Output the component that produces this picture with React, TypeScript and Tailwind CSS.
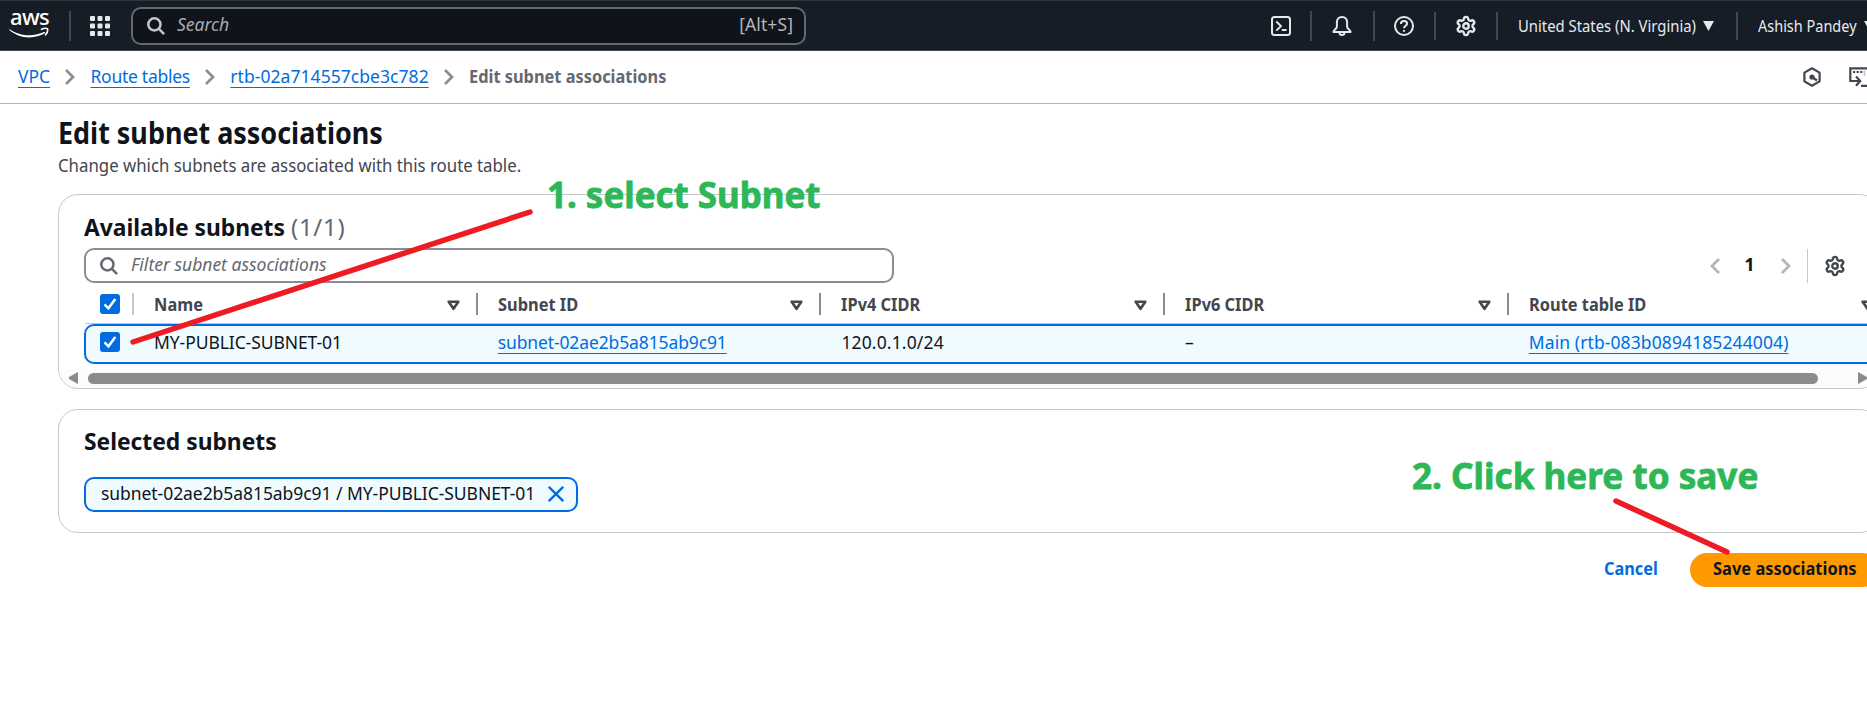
import type { ReactNode } from "react";
import { Settings } from "lucide-react";

const columns = ["Name", "Subnet ID", "IPv4 CIDR", "IPv6 CIDR", "Route table ID"];

function AwsLogo() {
  return (
    <div className="mt-[7px] flex w-[40px] shrink-0 flex-col self-start">
      <span className="h-[19px] pl-px text-[22px] leading-[17px] font-medium tracking-[-0.7px] text-white">aws</span>
      <svg className="h-[11px] w-[40px]" viewBox="0 0 40 11" fill="none">
        <path d="M.6 2.2C7 6.400 13 8.200 20.500 8.200c5 0 10.500-1.200 14.600-3.200.9-.3 1.500.7.700 1.300C31.500 9 25.500 10.400 20.300 10.400 12.500 10.400 5.500 7.600.4 3c-.5-.5-.2-1 .2-.8Z" fill="#fff" />
        <path d="M32.500 2.300c2.200-1 5-1 6-.6.400 1.600-.5 4.600-2 6.200" stroke="#fff" strokeWidth="1.600" strokeLinecap="round" strokeLinejoin="round" />
      </svg>
    </div>
  );
}

function AppsIcon() {
  return (
    <svg className="size-[20px]" viewBox="0 0 20 20" fill="#e1ebec">
      {[0, 7.500, 15].map((y) => [0, 7.500, 15].map((x) => <rect key={`${x}-${y}`} x={x} y={y} width="5" height="5" rx="1" />))}
    </svg>
  );
}

function SearchIcon({ className }: { className: string }) {
  return (
    <svg className={className} viewBox="0 0 18 18" fill="none" stroke="currentColor" strokeWidth="2.500">
      <circle cx="7.400" cy="7.400" r="6.100" />
      <path d="M11.700 11.700l5.400 5.400" />
    </svg>
  );
}

function TerminalIcon() {
  return (
    <svg className="size-[20px]" viewBox="0 0 20 20" fill="none" stroke="#e1ebec" strokeWidth="2" strokeLinejoin="round">
      <rect x="1" y="1" width="18" height="18" rx="2.500" />
      <path d="M5.300 5.500l4.700 4.600-4.700 4.500M10.800 14h4.800" />
    </svg>
  );
}

function BellIcon() {
  return (
    <svg className="size-[20px]" viewBox="0 0 20 20" fill="none" stroke="#e1ebec" strokeWidth="2" strokeLinejoin="round">
      <path d="M10 1C6.800 1 4.900 3.300 4.900 6.300v4.200c0 1.300-.8 2.200-2 3l-1.500 2.400h17.200l-1.500-2.400c-1.200-.8-2-1.700-2-3V6.300C15.100 3.300 13.200 1 10 1Z" />
      <path d="M7.500 16.500c0 1.500 1 2.500 2.500 2.500s2.500-1 2.500-2.500" />
    </svg>
  );
}

function HelpIcon() {
  return (
    <svg className="size-[20px]" viewBox="0 0 20 20" fill="none" stroke="#e1ebec" strokeWidth="2">
      <circle cx="10" cy="10" r="9" />
      <path d="M6.900 8c0-1.700 1.300-2.900 3.100-2.900s3.100 1.100 3.100 2.600c0 2-3.100 2.100-3.100 4.500" />
      <path d="M9 14h2v1.800H9z" fill="#e1ebec" stroke="none" />
    </svg>
  );
}

function Chevron({ className, left = false }: { className: string; left?: boolean }) {
  return (
    <svg className={`shrink-0 ${className}`} viewBox="0 0 10 16" fill="none" stroke="currentColor" strokeWidth="2.700">
      <path d={left ? "M9 1L2 8l7 7" : "M1 1l7 7-7 7"} />
    </svg>
  );
}

function SortIcon() {
  return (
    <svg className="h-[11px] w-[13px]" viewBox="0 0 13 11" fill="none" stroke="#424650" strokeWidth="2.600" strokeLinejoin="round">
      <path d="M1.700 1.700h9.600L6.500 8.800z" />
    </svg>
  );
}

function Checkbox() {
  return (
    <svg className="size-[20px] shrink-0" viewBox="0 0 20 20" fill="none">
      <rect width="20" height="20" rx="3" fill="#006ce0" />
      <path d="M4.500 10.300l4 4 6.800-9.300" stroke="#fff" strokeWidth="2.500" />
    </svg>
  );
}

function Link({ children, className = "" }: { children: ReactNode; className?: string }) {
  return (
    <a className={`shrink-0 whitespace-nowrap text-[#006ce0] underline decoration-1 underline-offset-[4px] [text-decoration-skip-ink:none] ${className}`}>
      {children}
    </a>
  );
}

function Divider({ className }: { className: string }) {
  return <span className={`w-[2px] shrink-0 bg-[#424650] ${className}`} />;
}

function TopBar() {
  return (
    <header className="flex h-[51px] items-center border-t border-b border-t-[#2f343d] border-b-[#424650] bg-[#161d26] pl-[9px] text-[#e6eaee]">
      <AwsLogo />
      <Divider className="ml-[20px] h-[30px]" />
      <div className="ml-[19px] shrink-0"><AppsIcon /></div>
      <div className="ml-[21px] flex h-[38px] w-[675px] shrink-0 items-center rounded-[10px] border-2 border-[#656871] bg-[#0f141a] pr-[11px] pl-[14px] text-[17.5px]">
        <SearchIcon className="size-[18px] text-[#c6c6cd]" />
        <span className="ml-[12px] pb-[2px] text-[#a9a9b3] italic">Search</span>
        <span className="ml-auto pb-[2px] tracking-[0.1px] text-[#b4b4bb]">[Alt+S]</span>
      </div>
      <div className="ml-[465px] flex shrink-0 items-center">
        <TerminalIcon />
        <Divider className="ml-[19px] h-[30px]" />
        <div className="ml-[20px]"><BellIcon /></div>
        <Divider className="ml-[21px] h-[30px]" />
        <div className="ml-[19px]"><HelpIcon /></div>
        <Divider className="ml-[20px] h-[28px]" />
        <div className="ml-[19px]"><Settings size={22} strokeWidth={2.600} color="#e1ebec" /></div>
        <Divider className="ml-[19px] h-[28px]" />
      </div>
      <div className="ml-[20px] flex w-[197px] shrink-0 items-center">
        <span className="w-[178px] shrink-0 origin-left scale-x-[0.927] text-[16px] whitespace-nowrap">United States (N. Virginia)</span>
        <svg className="ml-[7px] h-[10px] w-[11px] shrink-0" viewBox="0 0 11 10" fill="#e1ebec"><path d="M0 0h11L5.500 10z" /></svg>
      </div>
      <Divider className="ml-[21px] h-[28px]" />
      <span className="ml-[20px] w-[99px] shrink-0 origin-left scale-x-[0.905] text-[16px] whitespace-nowrap">Ashish Pandey</span>
      <svg className="ml-[7px] h-[10px] w-[11px] shrink-0" viewBox="0 0 11 10" fill="#e1ebec"><path d="M0 0h11L5.500 10z" /></svg>
    </header>
  );
}

function Breadcrumbs() {
  return (
    <nav className="flex h-[53px] items-center border-b border-[#b4b4bb] pb-px pl-[18px] text-[17.5px]">
      <Link className="w-[32px]">VPC</Link>
      <Chevron className="ml-[15px] h-[16px] w-[10px] text-[#8c8c94]" />
      <Link className="ml-[15.500px] tracking-[-0.280px]">Route tables</Link>
      <Chevron className="ml-[15.500px] h-[16px] w-[10px] text-[#8c8c94]" />
      <Link className="ml-[15px] tracking-[0.050px]">rtb-02a714557cbe3c782</Link>
      <Chevron className="ml-[15.500px] h-[16px] w-[10px] text-[#8c8c94]" />
      <span className="ml-[15px] w-[212px] shrink-0 origin-left scale-x-[0.935] font-bold whitespace-nowrap text-[#656871]">Edit subnet associations</span>
      <svg className="ml-[1122px] h-[20px] w-[18px] shrink-0" viewBox="0 0 18 20" fill="none" stroke="#424650" strokeWidth="2.200" strokeLinejoin="round">
        <path d="M9 1.300l7.600 4.300v8.800L9 18.700l-7.600-4.300V5.600z" />
        <path d="M9 10l5 3.500" />
        <circle cx="9" cy="10" r="2.600" fill="#424650" stroke="none" />
      </svg>
      <svg className="ml-[28px] h-[20px] w-[24px] shrink-0" viewBox="0 0 24 20" fill="none" stroke="#424650" strokeWidth="2.200">
        <path d="M5 14H1.300V1.300H22M12 18.800h10" />
        <path d="M4 5h2.200M7.600 5h2.200M11.200 5h2.200" />
        <path d="M3.500 14h7M7 9.500l4.200 4.500L7 18.800" />
        <path d="M15.500 2v7" stroke="#c6c6cd" strokeWidth="1.500" />
      </svg>
    </nav>
  );
}

function AvailableSubnets() {
  return (
    <section className="flex h-[195px] w-[1822px] flex-col overflow-hidden rounded-[20px] border border-[#c6c6cd] bg-white">
      <h2 className="flex h-[53px] items-end pl-[25px] text-[24px] leading-[43px] font-bold text-[#0f141a]">
        <span className="w-[207px] origin-left scale-x-[0.950] whitespace-nowrap">Available subnets</span>
        <span className="font-normal tracking-[0.700px] text-[#656871]">(1/1)</span>
      </h2>
      <div className="flex h-[35px] items-center pl-[25px]">
        <div className="flex h-[35px] w-[810px] items-center rounded-[10px] border-2 border-[#8c8c94] pl-[14px] text-[17.5px]">
          <SearchIcon className="size-[18px] text-[#656871]" />
          <span className="ml-[13px] pb-[2px] text-[#656871] italic">Filter subnet associations</span>
        </div>
        <div className="ml-[816px] flex items-center">
          <Chevron left className="h-[16px] w-[10px] text-[#b4b4bb]" />
          <span className="w-[61px] pr-[2px] pb-[2px] text-center text-[17.5px] font-bold text-[#0f141a]">1</span>
          <Chevron className="h-[16px] w-[10px] text-[#b4b4bb]" />
          <span className="ml-[16px] h-[34px] w-px bg-[#c6c6cd]" />
          <Settings className="ml-[16px]" size={22} strokeWidth={2.600} color="#424650" />
        </div>
      </div>
      <div className="ml-[26px] grid h-[41px] shrink-0 grid-cols-[49px_343.7px_343.7px_343.7px_343.7px_383px] border-b border-[#c6c6cd] pt-[1px]">
        <div className="flex items-center pl-[15px]">
          <Checkbox />
          <span className="ml-[12px] h-[22px] w-[2px] shrink-0 bg-[#c6c6cd]" />
        </div>
        {columns.map((name) => (
          <div key={name} className="flex items-center">
            <span className="w-[200px] origin-left scale-x-[0.935] pt-px pl-[21.500px] text-[17.5px] font-bold whitespace-nowrap text-[#424650]">{name}</span>
            <span className="mt-[3px] ml-auto"><SortIcon /></span>
            <span className="ml-[16px] h-[22px] w-[2px] shrink-0 bg-[#8c8c94]" />
          </div>
        ))}
      </div>
      <div className="ml-[25px] grid h-[40px] w-[1830px] shrink-0 grid-cols-[48px_343.7px_343.7px_343.7px_343.7px_343.7px] items-center rounded-l-[10px] border-2 border-[#006ce0] bg-[#f0fbff] text-[17.5px] text-[#0f141a]">
        <div className="pb-[4px] pl-[14px]"><Checkbox /></div>
        <span className="pb-[4px] pl-[20px] tracking-[-0.080px]">MY-PUBLIC-SUBNET-01</span>
        <span className="pb-[4px] pl-[20px]"><Link className="tracking-[-0.120px]">subnet-02ae2b5a815ab9c91</Link></span>
        <span className="pb-[4px] pl-[20px] tracking-[0.150px]">120.0.1.0/24</span>
        <span className="pb-[4px] pl-[20px]">–</span>
        <span className="pb-[4px] pl-[20px]"><Link className="tracking-[0.100px]">Main (rtb-083b0894185244004)</Link></span>
      </div>
      <div className="mt-[5px] flex h-[18px] items-center bg-[#fcfcfc] pl-[10px]">
        <svg className="h-[12px] w-[9px]" viewBox="0 0 9 12" fill="#8b8b8b"><path d="M9 0v12L0 7V5z" /></svg>
        <span className="ml-[10px] h-[11px] w-[1730px] shrink-0 rounded-full bg-[#8b8b8b]" />
        <svg className="ml-[40px] h-[12px] w-[9px] shrink-0" viewBox="0 0 9 12" fill="#8b8b8b"><path d="M0 0v12l9-5V5z" /></svg>
      </div>
    </section>
  );
}

function SelectedSubnets() {
  return (
    <section className="mt-[20px] flex h-[124px] w-[1822px] flex-col items-start rounded-[20px] border border-[#c6c6cd] bg-white pt-[12px] pl-[25px]">
      <h2 className="h-[55px] origin-left scale-x-[0.950] text-[24px] leading-[37px] font-bold text-[#0f141a]">Selected subnets</h2>
      <div className="flex h-[35px] w-[494px] items-center rounded-[10px] border-2 border-[#006ce0] bg-[#f0fbff] pl-[15px] text-[17.5px] text-[#0f141a]">
        <span className="w-[436px] shrink-0 pb-[3px] tracking-[-0.060px] whitespace-nowrap">subnet-02ae2b5a815ab9c91 / MY-PUBLIC-SUBNET-01</span>
        <svg className="mb-[2px] ml-[11px] size-[16px] shrink-0" viewBox="0 0 16 16" stroke="#006ce0" strokeWidth="2.300"><path d="M.8.8l14.400 14.400M15.200.8L.8 15.200" /></svg>
      </div>
    </section>
  );
}

function Annotations() {
  return (
    <div className="pointer-events-none absolute inset-0 text-[36px] leading-[48px] font-bold whitespace-nowrap text-[#2db757] [-webkit-text-stroke:0.8px_#2db757]">
      <svg className="absolute inset-0 h-[706px] w-[1867px]" viewBox="0 0 1867 706" fill="none" stroke="#ed1c24" strokeWidth="5.500" strokeLinecap="round">
        <path d="M133 342L530 212M1616 501L1727 552" />
      </svg>
      <span className="absolute top-[171px] left-[547px] origin-left scale-x-[0.970]">1. select Subnet</span>
      <span className="absolute top-[452px] left-[1412px] origin-left scale-x-[0.975]">2. Click here to save</span>
    </div>
  );
}

export default function App() {
  return (
    <div className="relative h-[706px] w-[1867px] overflow-hidden bg-white font-['Noto_Sans',sans-serif]">
      <TopBar />
      <Breadcrumbs />
      <main className="pl-[58px]">
        <h1 className="h-[48px] w-[362px] origin-left scale-x-[0.913] text-[29.500px] leading-[58px] font-bold whitespace-nowrap text-[#0f141a]">Edit subnet associations</h1>
        <p className="h-[42px] w-[500px] origin-left scale-x-[0.960] text-[17.5px] leading-[27px] text-[#424650]">Change which subnets are associated with this route table.</p>
        <AvailableSubnets />
        <SelectedSubnets />
        <div className="mt-[20px] flex h-[34px] items-center text-[17.5px] font-bold whitespace-nowrap">
          <a className="ml-[1546px] w-[86px] shrink-0 origin-left scale-x-[0.930] pb-[3px] text-[#006ce0]">Cancel</a>
          <button className="flex h-[34px] w-[190px] shrink-0 items-center rounded-full bg-[#ff9900] pl-[23px] text-[#0f141a]">
            <span className="origin-left scale-x-[0.940] pb-[3px]">Save associations</span>
          </button>
        </div>
      </main>
      <Annotations />
    </div>
  );
}
